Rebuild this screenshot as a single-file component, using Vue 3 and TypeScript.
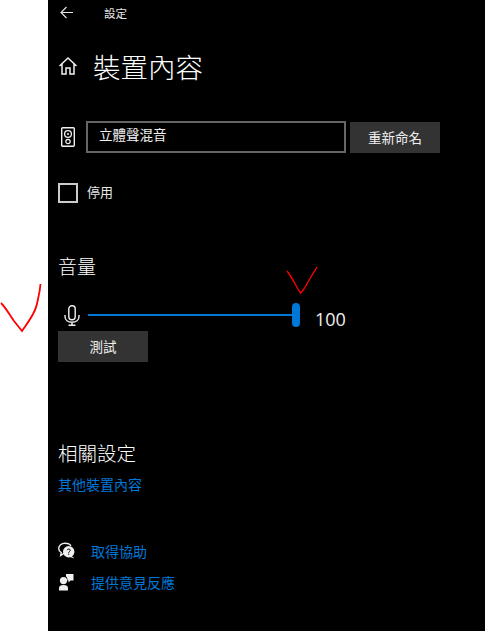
<script setup lang="ts">
const title: string = '裝置內容'
</script>

<template>
  <div class="page">
    <aside class="side">
      <svg class="ink ink-left" width="44" height="60" viewBox="0 0 44 60">
        <path d="M1 20 C6 25 9 31 14 38 L22 48 C26 42 30 37 33 31 C36 26 37 22 38 16 C39 12 40 8 40.500 1" fill="none" stroke="#f00" stroke-width="1.800" />
      </svg>
    </aside>
    <main class="main">
      <header class="topbar">
        <svg class="back" width="14" height="14" viewBox="0 0 14 14">
          <path d="M1 6.500H13M6.500 1L1 6.500L6.500 12" fill="none" stroke="#e6e6e6" stroke-width="1.100" />
        </svg>
        <span class="top-title">設定</span>
      </header>

      <div class="heading">
        <svg class="home" width="20" height="20" viewBox="0 0 20 20">
          <path d="M1.500 10L10 2L18.500 10M4 8V18H8V12H12V18H16V8" fill="none" stroke="#f0f0f0" stroke-width="1.500" />
        </svg>
        <h1>{{ title }}</h1>
      </div>

      <div class="name-row">
        <svg class="speaker" width="16" height="22" viewBox="0 0 16 22">
          <rect x="1.700" y="1.700" width="12.600" height="18.600" rx="1" fill="none" stroke="#f0f0f0" stroke-width="1.400" />
          <circle cx="8" cy="8" r="3.400" fill="none" stroke="#f0f0f0" stroke-width="1.300" />
          <circle cx="8" cy="8" r="1" fill="#f0f0f0" />
          <circle cx="8" cy="15.500" r="2.200" fill="none" stroke="#f0f0f0" stroke-width="1.200" />
        </svg>
        <div class="input">立體聲混音</div>
        <button class="btn rename">重新命名</button>
      </div>

      <label class="check-row">
        <span class="check"></span>
        <span class="check-label">停用</span>
      </label>

      <h2 class="volume-title">音量</h2>

      <div class="slider-row">
        <svg class="mic" width="16" height="21" viewBox="0 0 16 21">
          <rect x="4.800" y="0.800" width="6.400" height="14" rx="3" fill="none" stroke="#f0f0f0" stroke-width="1.400" />
          <path d="M1 10V11.500C1 15 4 17.200 8 17.200C12 17.200 15 15 15 11.500V10M8 17.200V20M4.500 20.300H11.500" fill="none" stroke="#f0f0f0" stroke-width="1.400" />
        </svg>
        <div class="track">
          <span class="fill"></span>
          <span class="thumb"></span>
          <svg class="ink ink-top" width="34" height="32" viewBox="0 0 34 32">
            <path d="M2 5C6 10 9 16 13 23L15.500 27L19 23C23 16 27 9 32 1" fill="none" stroke="#f00" stroke-width="1.400" />
          </svg>
        </div>
        <span class="value">100</span>
      </div>

      <button class="btn test">測試</button>

      <h2 class="related">相關設定</h2>
      <a class="link other">其他裝置內容</a>

      <div class="help">
        <div class="help-row">
          <svg width="18" height="18" viewBox="0 0 18 18">
            <path d="M7 1.200C3.500 1.200 0.700 3.400 0.700 6.500C0.700 8.400 1.800 9.700 3.200 10.500L2.700 13.500L6 11.200" fill="none" stroke="#f0f0f0" stroke-width="1.400" />
            <path d="M7 1.200C9.500 1.200 12 2.200 13 4" fill="none" stroke="#f0f0f0" stroke-width="1.400" />
            <circle cx="10.700" cy="9.700" r="5.700" fill="#f0f0f0" />
            <path d="M13 13.500L16.500 16.500L12 15Z" fill="#f0f0f0" />
            <path d="M9.200 8.200C9.400 6.600 12.300 6.600 12.300 8.300C12.300 9.500 10.700 9.500 10.700 10.800" fill="none" stroke="#000" stroke-width="1" />
            <rect x="10.200" y="11.600" width="1" height="1.200" fill="#000" />
          </svg>
          <a class="link">取得協助</a>
        </div>
        <div class="help-row">
          <svg width="18" height="18" viewBox="0 0 18 18">
            <circle cx="5.500" cy="7.600" r="3.600" fill="#f0f0f0" />
            <path d="M1 17.500V15C1 13 2.500 12 5.500 12C8.500 12 10 13 10 15V17.500Z" fill="#f0f0f0" />
            <path d="M8 1H15.500V7.500H12.500L10.500 9.500V7.500H9.500C9.500 5.500 9 4 8 3.500Z" fill="#f0f0f0" />
          </svg>
          <a class="link">提供意見反應</a>
        </div>
      </div>
    </main>
  </div>
</template>

<style>
html, body { margin: 0; background: #000; }
</style>

<style scoped>
.page {
  display: flex;
  width: 485px;
  height: 631px;
  overflow: hidden;
  font-family: "Noto Sans CJK TC", "Liberation Sans", sans-serif;
  color: #fff;
}
.side {
  position: relative;
  flex: 0 0 48px;
  background: #fff;
}
.main {
  flex: 1;
  display: flex;
  flex-direction: column;
  align-items: flex-start;
  background: #000;
  padding-left: 10px;
  position: relative;
}
.ink { position: absolute; display: block; }
.ink-left { left: 0; top: 283px; }
.topbar {
  display: flex;
  align-items: center;
  height: 26px;
  padding-left: 2px;
}
.top-title {
  margin-left: 30px;
  font-size: 11.500px;
  line-height: 26px;
  color: #e6e6e6;
}
.heading {
  display: flex;
  align-items: center;
  margin-top: 20px;
  height: 40px;
}
.home { flex: none; margin-right: 15px; }
h1 {
  margin: 0;
  font-size: 27.500px;
  font-weight: 300;
  line-height: 40px;
  color: #fff;
}
.name-row {
  display: flex;
  align-items: center;
  margin-top: 35px;
  height: 32px;
}
.speaker { flex: none; margin: 0 10px 0 2px; }
.input {
  box-sizing: border-box;
  width: 260px;
  height: 32px;
  border: 2px solid #666;
  padding-left: 11px;
  font-size: 13.500px;
  line-height: 22px;
  color: #f0f0f0;
}
.btn {
  border: 0;
  padding: 0;
  width: 90px;
  height: 31px;
  background: #333;
  color: #f0f0f0;
  font-family: inherit;
  font-size: 13.500px;
  line-height: 31px;
}
.rename { margin-left: 4px; margin-top: 1px; }
.check-row {
  display: flex;
  align-items: center;
  margin-top: 30px;
  height: 20px;
}
.check {
  box-sizing: border-box;
  width: 20px;
  height: 20px;
  border: 2px solid #ccc;
}
.check-label {
  margin-left: 9px;
  font-size: 13px;
  line-height: 20px;
  margin-top: -3px;
  color: #e6e6e6;
}
.volume-title {
  margin: 51px 0 0;
  font-size: 19px;
  font-weight: 300;
  line-height: 24px;
  color: #fff;
}
.slider-row {
  display: flex;
  align-items: center;
  margin-top: 24px;
  height: 26px;
}
.mic { flex: none; margin: 0 8px 0 6px; }
.track {
  position: relative;
  display: flex;
  align-items: center;
  width: 212px;
  height: 26px;
}
.fill {
  flex: 1;
  height: 2px;
  margin-right: 4px;
  background: #0078d7;
}
.thumb {
  position: absolute;
  right: 0;
  top: 1px;
  width: 8px;
  height: 24px;
  border-radius: 4px;
  background: #0078d7;
}
.ink-top { left: 197px; top: -36px; }
.value {
  margin-left: 15px;
  margin-top: 7px;
  font-family: "Open Sans", "Liberation Sans", sans-serif;
  font-size: 18px;
  line-height: 24px;
  color: #f0f0f0;
}
.test { margin-top: 3px; }
.related {
  margin: 77px 0 0;
  font-size: 19.500px;
  font-weight: 300;
  line-height: 28px;
  color: #fff;
}
.link {
  font-size: 14px;
  line-height: 20px;
  color: #0078d7;
}
.other { margin-top: 7px; }
.help {
  display: flex;
  flex-direction: column;
  gap: 11px;
  margin-top: 47px;
}
.help-row {
  display: flex;
  align-items: center;
  height: 20px;
  gap: 15px;
}
</style>
